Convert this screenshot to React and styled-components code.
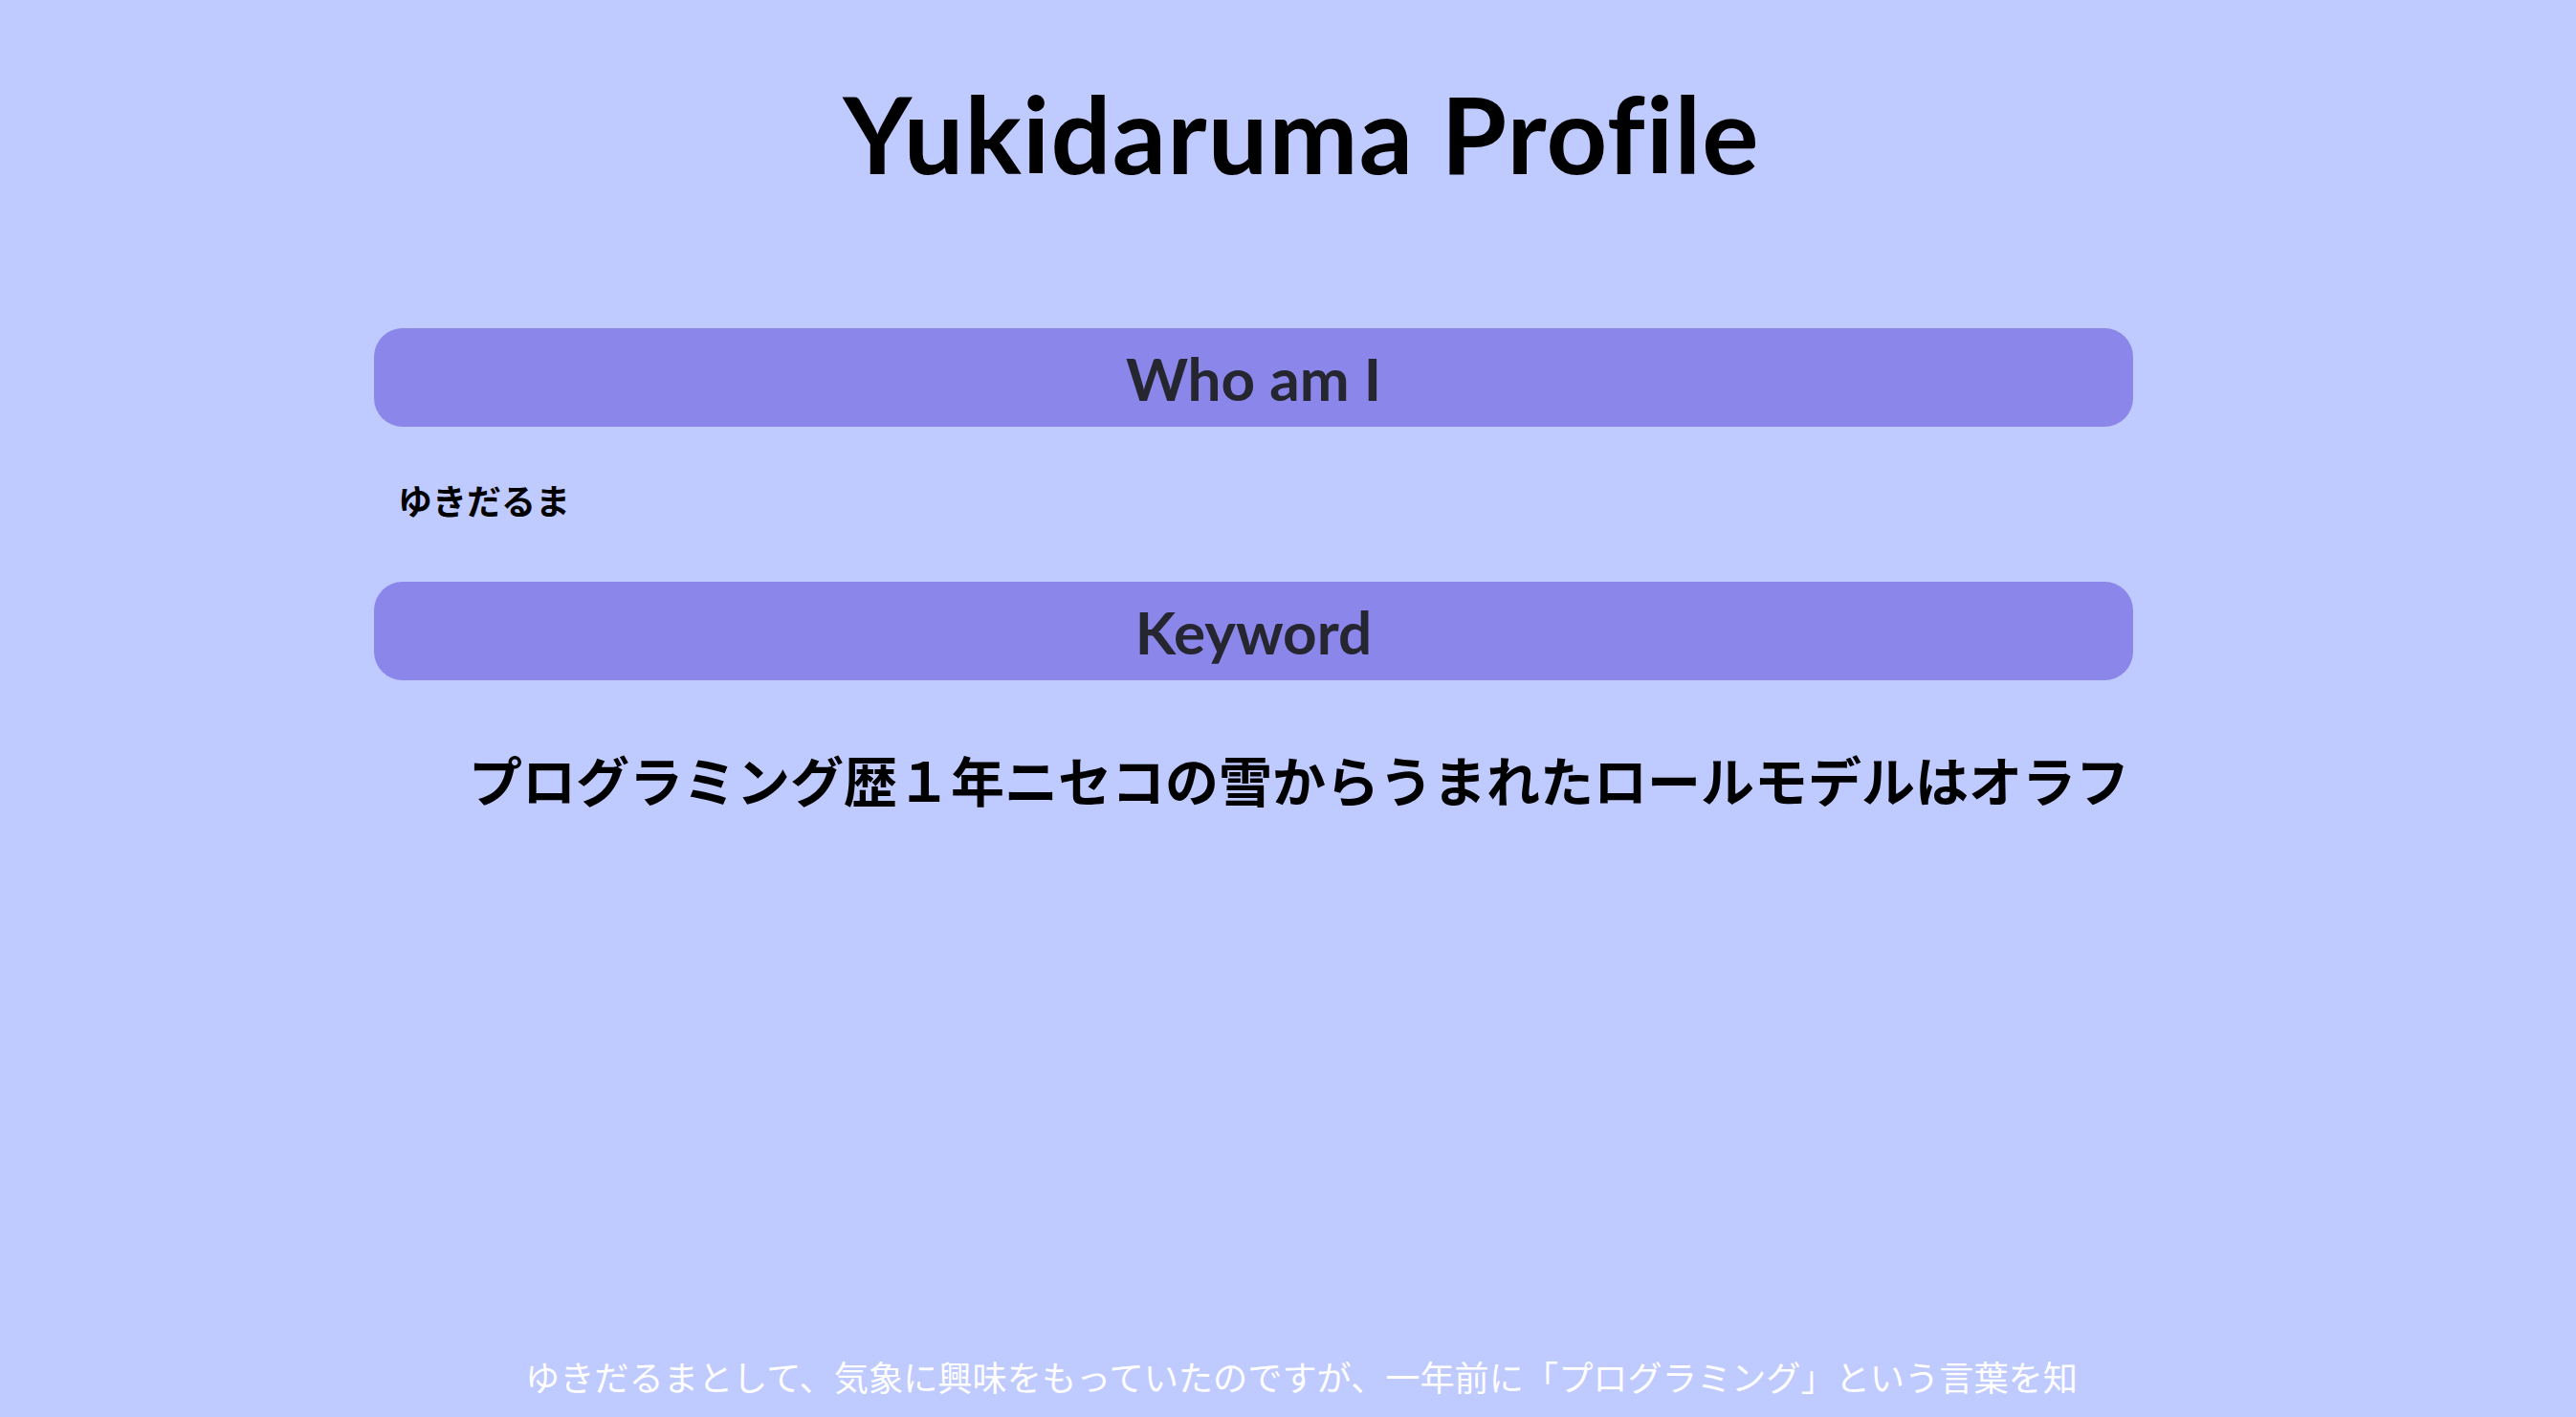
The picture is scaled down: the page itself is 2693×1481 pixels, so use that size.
import React from "react";
import styled, { createGlobalStyle } from "styled-components";

const GlobalStyle = createGlobalStyle`
    html, body {
        margin: 0;
        padding: 0;
        background: #bfcaff;
    }
    body {
        font-family: "Lato", "Noto Sans CJK JP", sans-serif;
    }
`;

const Page = styled.div`
    display: flex;
    flex-direction: column;
    align-items: center;
    width: 100%;
    height: 1481px;
    overflow: hidden;
    background: #bfcaff;
`;

const Title = styled.h1`
    margin: 73px 0 0 28px;
    font-family: "Lato", sans-serif;
    font-size: 111px;
    line-height: 132px;
    font-weight: 700;
    letter-spacing: 1.2px;
    color: #000;
`;

const Main = styled.div`
    display: flex;
    flex-direction: column;
    width: 1839px;
    margin-top: 138px;
    margin-left: -72px;
`;

const SectionBar = styled.h2`
    display: flex;
    justify-content: center;
    align-items: center;
    height: 103px;
    margin: ${(p) => p.$top || 0}px 0 0;
    border-radius: 30px;
    background: #8a86ea;
    color: #25262f;
    font-family: "Lato", sans-serif;
    font-size: 62px;
    font-weight: 700;
`;

const Name = styled.p`
    margin: 58px 0 0 25px;
    font-family: "Noto Sans CJK JP", sans-serif;
    font-size: 36px;
    line-height: 36px;
    font-weight: 700;
    color: #000;
`;

const Keyword = styled.p`
    margin: 75px 0 0 99px;
    font-family: "Noto Sans CJK JP", sans-serif;
    font-size: 56px;
    line-height: 56px;
    font-weight: 700;
    color: #000;
    white-space: nowrap;
`;

const Intro = styled.p`
    margin: auto 0 0;
    padding: 0 0 25px 28px;
    font-family: "Noto Sans CJK JP", sans-serif;
    font-size: 36.2px;
    line-height: 36px;
    font-weight: 400;
    color: #ffffff;
    text-align: center;
    white-space: nowrap;
`;

export default function App() {
    return (
        <Page>
            <GlobalStyle />
            <Title>Yukidaruma Profile</Title>
            <Main>
                <SectionBar>Who am I</SectionBar>
                <Name>ゆきだるま</Name>
                <SectionBar $top={68}>Keyword</SectionBar>
                <Keyword>プログラミング歴１年ニセコの雪からうまれたロールモデルはオラフ</Keyword>
            </Main>
            <Intro>ゆきだるまとして、気象に興味をもっていたのですが、一年前に「プログラミング」という言葉を知</Intro>
        </Page>
    );
}
